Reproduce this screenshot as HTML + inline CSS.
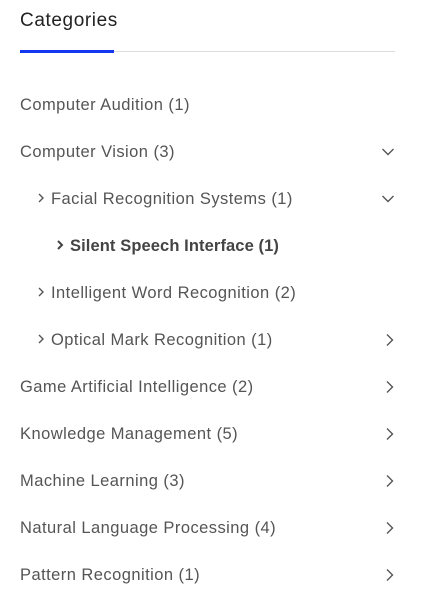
<!DOCTYPE html>
<html><head><style>
body{margin:0;background:#fff;font-family:"Liberation Sans",sans-serif;width:438px;height:602px;overflow:hidden;position:relative}
.t{position:absolute;left:20px;top:10px;font-size:19px;letter-spacing:0.6px;color:#222}
.g{position:absolute;left:20px;top:51px;width:375px;height:1px;background:#ddd}
.b{position:absolute;left:20px;top:50px;width:94px;height:3px;background:#1338f0}
.r{position:absolute;left:20px;font-size:16.5px;letter-spacing:0.45px;color:#555;line-height:20px;white-space:nowrap}
.r.s{font-weight:bold;color:#444;letter-spacing:0.1px}
svg{position:absolute}
</style></head><body>
<div class="t">Categories</div>
<div class="g"></div><div class="b"></div>
<div class="r" style="top:95px">Computer Audition (1)</div>
<div class="r" style="top:142px">Computer Vision (3)</div>
<div class="r" style="top:189px;left:51px">Facial Recognition Systems (1)</div>
<div class="r s" style="top:236px;left:70px">Silent Speech Interface (1)</div>
<div class="r" style="top:283px;left:51px">Intelligent Word Recognition (2)</div>
<div class="r" style="top:330px;left:51px">Optical Mark Recognition (1)</div>
<div class="r" style="top:377px">Game Artificial Intelligence (2)</div>
<div class="r" style="top:424px">Knowledge Management (5)</div>
<div class="r" style="top:471px">Machine Learning (3)</div>
<div class="r" style="top:518px">Natural Language Processing (4)</div>
<div class="r" style="top:565px">Pattern Recognition (1)</div>
<!-- small inline chevrons -->
<svg style="left:37px;top:192px" width="8" height="12"><path d="M2 2l4 4-4 4" stroke="#555" stroke-width="1.4" fill="none"/></svg>
<svg style="left:56px;top:239px" width="8" height="12"><path d="M2 2l4 4-4 4" stroke="#444" stroke-width="2" fill="none"/></svg>
<svg style="left:37px;top:286px" width="8" height="12"><path d="M2 2l4 4-4 4" stroke="#555" stroke-width="1.4" fill="none"/></svg>
<svg style="left:37px;top:333px" width="8" height="12"><path d="M2 2l4 4-4 4" stroke="#555" stroke-width="1.4" fill="none"/></svg>
<!-- down chevrons -->
<svg style="left:381px;top:147px" width="14" height="10"><path d="M1.5 2l5.5 5.5 5.5-5.5" stroke="#555" stroke-width="1.4" fill="none"/></svg>
<svg style="left:381px;top:194px" width="14" height="10"><path d="M1.5 2l5.5 5.5 5.5-5.5" stroke="#555" stroke-width="1.4" fill="none"/></svg>
<!-- right chevrons -->
<svg style="left:385px;top:333px" width="10" height="14"><path d="M2 1.5l5.5 5.5-5.5 5.5" stroke="#555" stroke-width="1.4" fill="none"/></svg>
<svg style="left:385px;top:380px" width="10" height="14"><path d="M2 1.5l5.5 5.5-5.5 5.5" stroke="#555" stroke-width="1.4" fill="none"/></svg>
<svg style="left:385px;top:427px" width="10" height="14"><path d="M2 1.5l5.5 5.5-5.5 5.5" stroke="#555" stroke-width="1.4" fill="none"/></svg>
<svg style="left:385px;top:474px" width="10" height="14"><path d="M2 1.5l5.5 5.5-5.5 5.5" stroke="#555" stroke-width="1.4" fill="none"/></svg>
<svg style="left:385px;top:521px" width="10" height="14"><path d="M2 1.5l5.5 5.5-5.5 5.5" stroke="#555" stroke-width="1.4" fill="none"/></svg>
<svg style="left:385px;top:568px" width="10" height="14"><path d="M2 1.5l5.5 5.5-5.5 5.5" stroke="#555" stroke-width="1.4" fill="none"/></svg>
</body></html>
